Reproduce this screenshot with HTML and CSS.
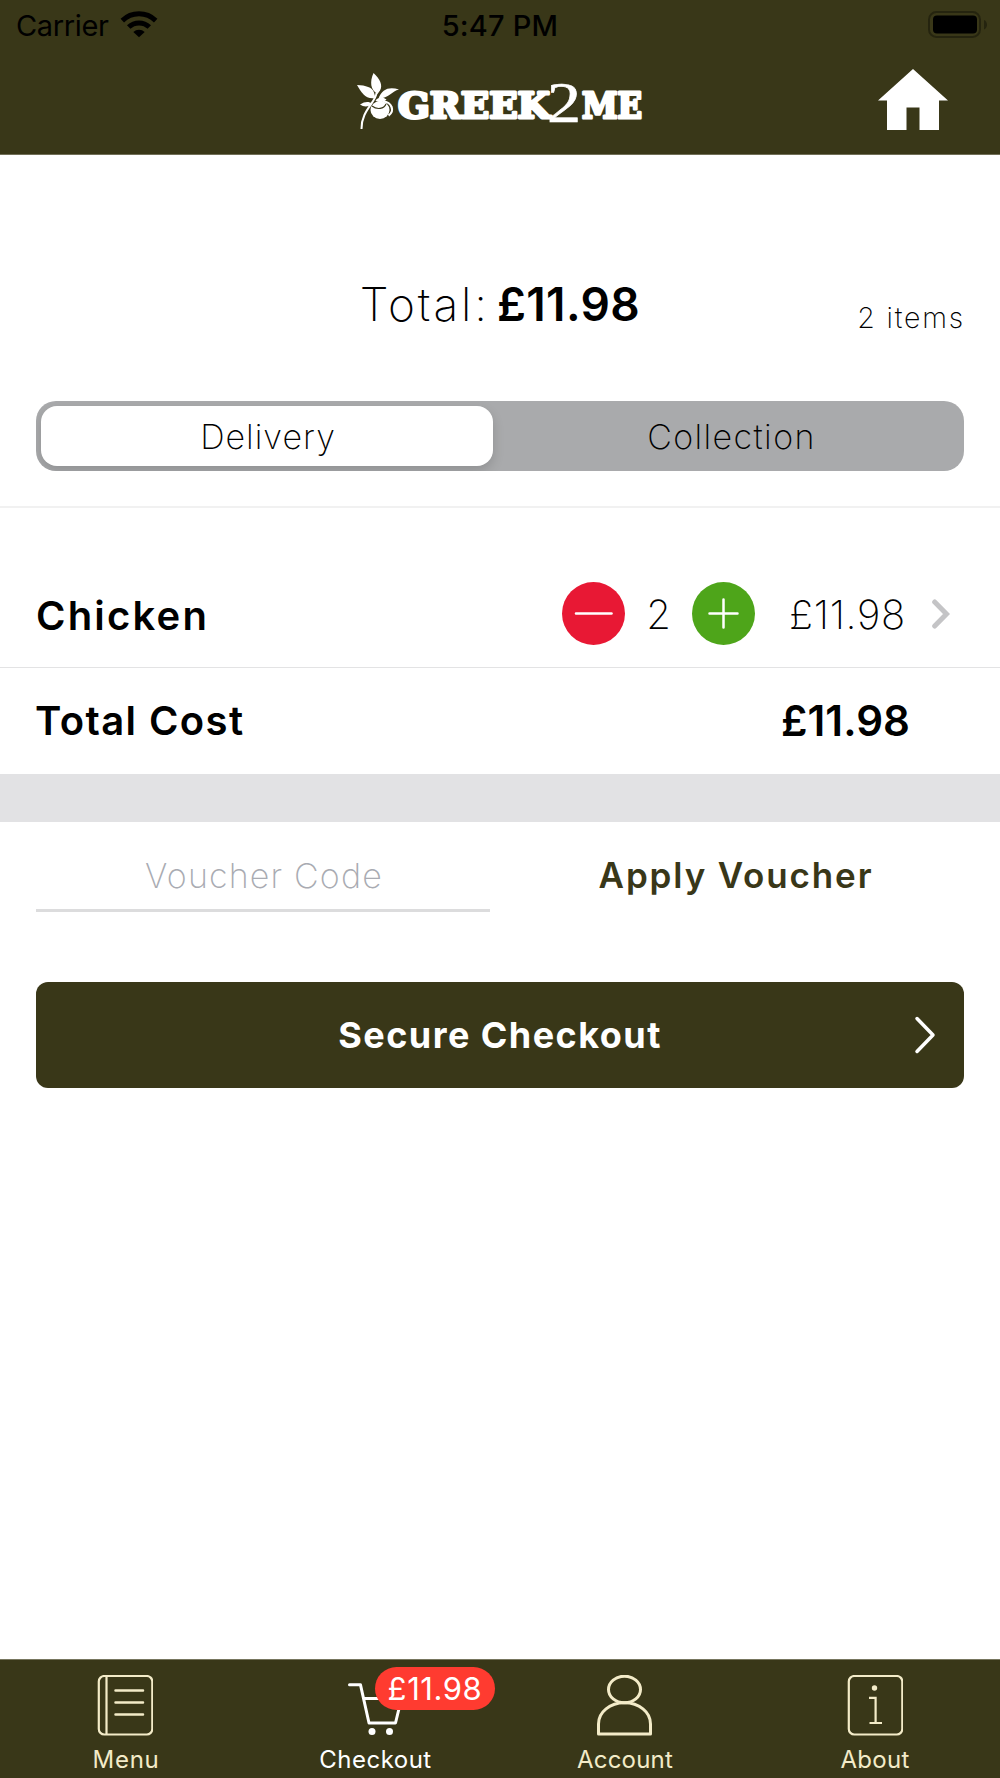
FILE: index.html
```html
<!DOCTYPE html>
<html lang="en">
<head>
<meta charset="utf-8">
<title>Greek2Me – Checkout</title>
<link rel="stylesheet" href="styles.css">
</head>
<body>
<div class="screen">
  <header class="header">
    <div class="status">
      <div class="status-left">
        <span class="carrier">Carrier</span>
        <svg class="wifi" width="38" height="28" viewBox="0 0 38 28">
          <path d="M2.300 10.600A24 24 0 0 1 35.700 10.600" fill="none" stroke="#000" stroke-width="5"/>
          <path d="M8.700 17A15 15 0 0 1 29.300 17" fill="none" stroke="#000" stroke-width="5"/>
          <path d="M13.300 21.900A8.400 8.400 0 0 1 24.700 21.900L19 27.300Z" fill="#000"/>
        </svg>
      </div>
      <span class="clock">5:47 PM</span>
      <div class="status-right">
        <svg width="60" height="28" viewBox="0 0 60 28">
          <rect x="1" y="1" width="51" height="25" rx="7.500" fill="none" stroke="#25240f" stroke-width="2"/>
          <rect x="5" y="4.500" width="44" height="18" rx="4" fill="#000"/>
          <path d="M56 9q3 1.500 3 4.800t-3 4.800z" fill="#25240f"/>
        </svg>
      </div>
    </div>
    <div class="brand">
      <svg class="logo" width="288" height="62" viewBox="0 0 288 62" fill="#fff">
        <path d="M16.500 0C23 6 26 12 23 17.500L20.500 21C13.500 17 12.500 9 16.500 0Z"/>
        <path d="M0 12C9 12.500 15 14 17 19.500L18.500 25C9 27 4.500 20 0 12Z"/>
        <path d="M21.500 25.500C25 16 32 13.500 42 16.500C35 18 32 25.500 21.500 25.500Z"/>
        <path d="M18.500 27.500C22 23.500 26 24 29.500 26.500C26 30 22 29.500 18.500 27.500Z"/>
        <path d="M3 31.500C8 28 12 28.500 15.500 30.500C12 34 7 34.500 3 31.500Z"/>
        <path d="M19.500 20C19 29 4 38 4.500 56" fill="none" stroke="#fff" stroke-width="2"/>
        <ellipse cx="23" cy="37" rx="9.500" ry="9"/>
        <path d="M15 33C20 37 27 36 29 31" fill="none" stroke="#393718" stroke-width="1.200"/>
        <path d="M26 28.500C35 29 38 38 31.500 42.500" fill="none" stroke="#fff" stroke-width="2.200"/>
        <g class="logo-slab">
          <text x="41" y="45" textLength="152" lengthAdjust="spacingAndGlyphs">GREEK</text>
          <text x="225" y="45" textLength="60" lengthAdjust="spacingAndGlyphs">ME</text>
        </g>
        <text class="logo-two" x="190" y="48.500" textLength="34" lengthAdjust="spacingAndGlyphs">2</text>
      </svg>
      <svg class="home" width="70" height="62" viewBox="0 0 70 62">
        <path d="M35 0L70 31.500H61V61H41.500V38.500H28.500V61H9V31.500H0Z" fill="#fff"/>
      </svg>
    </div>
  </header>

  <main class="content">
    <section class="summary">
      <div class="summary-row">
        <div class="total"><span class="total-label">Total:</span><strong class="total-price">£11.98</strong></div>
        <span class="count">2 items</span>
      </div>
      <div class="segment">
        <div class="option option-on"><span class="delivery">Delivery</span></div>
        <div class="option"><span class="collection">Collection</span></div>
      </div>
    </section>

    <section class="item">
      <span class="item-name">Chicken</span>
      <svg width="63" height="63" viewBox="0 0 63 63"><circle cx="31.500" cy="31.500" r="31.500" fill="#e81834"/><path d="M14 31.500H49.500" stroke="#fff" stroke-width="2.500" stroke-linecap="round"/></svg>
      <span class="quantity">2</span>
      <svg width="63" height="63" viewBox="0 0 63 63"><circle cx="31.500" cy="31.500" r="31.500" fill="#4ea51a"/><path d="M17.500 31.500H45.500M31.500 17.500V45.500" stroke="#fff" stroke-width="2.500" stroke-linecap="round"/></svg>
      <span class="item-price">£11.98</span>
      <svg width="18" height="30" viewBox="0 0 18 30"><path d="M2.700 3L14.500 15L2.700 27" fill="none" stroke="#c4c4c6" stroke-width="5" stroke-linecap="round"/></svg>
    </section>

    <section class="cost">
      <span class="cost-label">Total Cost</span>
      <span class="cost-price">£11.98</span>
    </section>

    <div class="band"></div>

    <section class="voucher">
      <div class="voucher-field"><span class="voucher-hint">Voucher Code</span></div>
      <div class="voucher-action"><span class="voucher-apply">Apply Voucher</span></div>
    </section>

    <div class="checkout">
      <span class="checkout-label">Secure Checkout</span>
      <svg width="22" height="38" viewBox="0 0 22 38"><path d="M3 2.500L19 19L3 35.500" fill="none" stroke="#fff" stroke-width="3.500" stroke-linecap="round" stroke-linejoin="round"/></svg>
    </div>
  </main>

  <nav class="tabs">
    <div class="tab">
      <svg width="56" height="61" viewBox="0 0 56 61" fill="none" stroke="#f3ebc8" stroke-width="2.200">
        <rect x="1.800" y="1" width="53.500" height="58.500" rx="5.500"/>
        <path d="M9.500 1V59.500"/>
        <path d="M18.500 15.500H46M18.500 27.500H46M18.500 39.500H46" stroke-linecap="round" stroke-width="2.500"/>
      </svg>
      <span class="tab-label tab-menu">Menu</span>
    </div>
    <div class="tab tab-on">
      <svg width="56" height="61" viewBox="0 0 56 61" fill="none" stroke="#fff" stroke-width="3">
        <path d="M2.500 9.800H13.500L22 48H48.500L56 17" stroke-linecap="round" stroke-linejoin="round"/>
        <path d="M17 23.500H54"/>
        <circle cx="25" cy="56.500" r="3.500" fill="#fff" stroke="none"/><circle cx="42.500" cy="56.500" r="3.500" fill="#fff" stroke="none"/>
      </svg>
      <span class="tab-label tab-checkout">Checkout</span>
      <span class="badge"><span class="badge-text">£11.98</span></span>
    </div>
    <div class="tab">
      <svg width="56" height="61" viewBox="0 0 56 61" fill="none" stroke="#f3ebc8" stroke-width="3">
        <ellipse cx="27.500" cy="14.500" rx="16" ry="13.300"/>
        <path d="M1.500 59V49C1.500 37 13 27.800 27.500 27.800S53.500 37 53.500 49V59Z" stroke-linejoin="round"/>
      </svg>
      <span class="tab-label tab-account">Account</span>
    </div>
    <div class="tab">
      <svg width="56" height="61" viewBox="0 0 56 61" fill="none" stroke="#f3ebc8" stroke-width="2.200">
        <rect x="1.800" y="1" width="53.500" height="58.500" rx="5.500"/>
        <circle cx="27.500" cy="13" r="2.700" fill="#f3ebc8" stroke="none"/>
        <path d="M22 22.800H28.600V48M22.500 48H35"/>
      </svg>
      <span class="tab-label tab-about">About</span>
    </div>
  </nav>
</div>
</body>
</html>
```
FILE: styles.css
```css
* { box-sizing: border-box; }
body { margin: 0; background: #fff; color: #000; font-family: Inter, "Liberation Sans", sans-serif; }
svg { display: block; flex: none; }
span, strong { white-space: nowrap; }

.screen { display: flex; flex-direction: column; width: 1000px; height: 1778px; }

/* Header */
.header { height: 155px; background: #393718; border-bottom: 1px solid #716f57; }
.status { display: grid; grid-template-columns: 1fr auto 1fr; align-items: center; height: 50px; padding: 0 12px 0 16px; }
.status-left { display: flex; align-items: center; gap: 11px; }
.carrier { font-size: 29px; letter-spacing: -.36px; }
.wifi { margin-top: -3px; }
.clock { margin-right: 4px; font-size: 29px; font-weight: 500; letter-spacing: .2px; }
.status-right { display: flex; justify-content: flex-end; }
.brand { display: flex; justify-content: space-between; padding: 19px 52px 0 357px; }
.logo { margin-top: 4px; overflow: visible; }
.logo-slab { font: bold 36px "DejaVu Serif", serif; stroke: #fff; stroke-width: 3px; stroke-linejoin: round; }
.logo-two { font: 58px "Liberation Serif", serif; stroke: #fff; stroke-width: .6px; }

.content { flex: 1; }

/* Order summary */
.summary { height: 353px; padding: 99px 36px 0; border-bottom: 2px solid #f1f1f1; }
.summary-row { display: grid; grid-template-columns: 1fr auto 1fr; align-items: center; height: 100px; }
.total { grid-column: 2; display: flex; gap: 7px; font-size: 46px; }
.total-label { font-weight: 200; letter-spacing: 2.900px; }
.total-price { font-weight: 600; letter-spacing: .4px; }
.count { justify-self: end; padding-top: 26px; margin-right: -1px; font-size: 28.500px; font-weight: 200; letter-spacing: 1.800px; }

.segment { display: grid; grid-template-columns: 452px 1fr; gap: 6px; height: 70px; margin-top: 47px; padding: 5px; border-radius: 20px; background: #a9aaac; overflow: hidden; }
.option { display: flex; align-items: center; justify-content: center; padding-left: 5px; font-size: 34px; font-weight: 200; }
.option-on { padding-left: 2px; border-radius: 16px; background: #fff; box-shadow: 0 5px 12px rgba(0, 0, 0, .15); }
.delivery { letter-spacing: 1px; }
.collection { letter-spacing: 1.400px; }

/* Basket item */
.item { display: grid; grid-template-columns: 1fr 63px 67px 63px 177px 18px; align-items: center; height: 160px; padding: 52px 50px 0 36px; border-bottom: 1px solid #e3e3e4; font-size: 40px; }
.item-name { padding-top: 3px; font-weight: 600; letter-spacing: 2.200px; }
.quantity { padding-top: 2px; text-align: center; font-weight: 200; }
.item-price { padding: 2px 0 0 34px; font-weight: 200; letter-spacing: .68px; }

.cost { display: flex; align-items: center; justify-content: space-between; height: 106px; padding: 0 90px 2px 35px; font-weight: 600; }
.cost-label { font-size: 40px; letter-spacing: 1.410px; }
.cost-price { font-size: 42px; letter-spacing: .05px; }

.band { height: 48px; background: #e2e2e4; }

/* Voucher */
.voucher { display: grid; grid-template-columns: 454px 1fr; gap: 9px; height: 90px; padding: 0 36px; }
.voucher-field, .voucher-action { display: flex; align-items: center; justify-content: center; padding-top: 20px; }
.voucher-field { border-bottom: 3px solid #dcdcdd; }
.voucher-action { padding: 19px 0 4px 9px; }
.voucher-hint { margin-left: 2px; font-size: 34px; font-weight: 200; letter-spacing: 1.150px; color: #a9abb2; }
.voucher-apply { font-size: 35px; font-weight: 600; letter-spacing: 1.860px; color: #393718; }

.checkout { display: grid; grid-template-columns: 1fr auto 1fr; align-items: center; height: 106px; margin: 70px 36px 0; padding: 0 28px; border-radius: 12px; background: #393718; color: #fff; }
.checkout-label { grid-column: 2; font-size: 36px; font-weight: 700; letter-spacing: 1.450px; }
.checkout svg { justify-self: end; }

/* Tab bar */
.tabs { display: grid; grid-template-columns: repeat(4, 1fr); height: 119px; background: #393718; border-top: 1px solid #77765f; color: #f3ebc8; }
.tab { position: relative; display: flex; flex-direction: column; align-items: center; padding-top: 15px; }
.tab-on { color: #fff; }
.tab-label { margin-top: 9px; font-size: 24px; line-height: 29px; }
.tab-menu { padding-left: 2px; letter-spacing: .72px; }
.tab-checkout { padding-left: 1px; letter-spacing: .48px; }
.tab-account { letter-spacing: .21px; }
.tab-about { letter-spacing: .29px; }
.badge { position: absolute; left: 125px; top: 7px; display: flex; align-items: center; justify-content: center; width: 120px; height: 43px; border-radius: 22px; background: #ff3b30; color: #fff; }
.badge-text { font-size: 31px; line-height: 1; padding-bottom: 1px; letter-spacing: .58px; }
```
